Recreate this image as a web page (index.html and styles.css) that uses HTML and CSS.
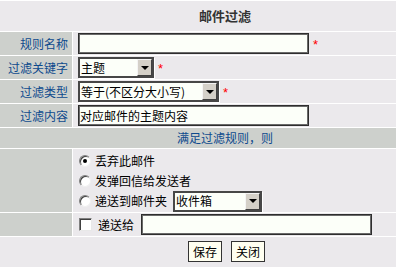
FILE: index.html
```html
<!DOCTYPE html>
<html lang="zh-CN">
<head>
<meta charset="utf-8">
<title>邮件过滤</title>
<link rel="stylesheet" href="styles.css">
</head>
<body>
<div class="form">
  <div class="title">邮件过滤</div>

  <div class="label">规则名称</div>
  <div class="field"><input class="text w231" type="text" value=""><span class="req">*</span></div>

  <div class="label">过滤关键字</div>
  <div class="field"><div class="select s1"><span class="val">主题</span><span class="btn"><i class="tri"></i></span></div><span class="req">*</span></div>

  <div class="label">过滤类型</div>
  <div class="field"><div class="select s2"><span class="val">等于(不区分大小写)</span><span class="btn"><i class="tri"></i></span></div><span class="req">*</span></div>

  <div class="label">过滤内容</div>
  <div class="field"><input class="text w231" type="text" value="对应邮件的主题内容"></div>

  <div class="section">满足过滤规则，则</div>

  <div class="label"></div>
  <div class="field options">
    <label class="opt"><input class="radio" type="radio" name="act" checked><span>丢弃此邮件</span></label>
    <label class="opt"><input class="radio" type="radio" name="act"><span>发弹回信给发送者</span></label>
    <label class="opt"><input class="radio" type="radio" name="act"><span>递送到邮件夹</span><div class="select s3"><span class="val">收件箱</span><span class="btn"><i class="tri"></i></span></div></label>
  </div>

  <div class="label"></div>
  <div class="field"><input class="check" type="checkbox"><span class="fwd">递送给</span><input class="text w231" type="text" value=""></div>

  <div class="footer"><button class="button">保存</button><button class="button">关闭</button></div>
</div>
</body>
</html>
```
FILE: styles.css
```css
html, body {
  margin: 0;
  padding: 0;
  overflow: hidden;
  background: #ebe9ec;
}
body {
  font-family: "Noto Sans CJK SC", "Noto Sans", sans-serif;
  font-size: 12px;
  color: #000;
}
.form {
  width: 396px;
  display: grid;
  grid-template-columns: 72px 1fr;
  grid-template-rows: 30px 23px 23px 23px 23px 20px 63px 23px 31px;
  gap: 1px;
  padding-top: 1px;
  background: #ffffff;
}
.title {
  grid-column: 1 / -1;
  background: #ebe9ec;
  display: flex;
  align-items: center;
  justify-content: center;
  padding-left: 54px;
  font-weight: bold;
  font-size: 13px;
  color: #333;
  line-height: 14px;
}
.label {
  background: #cdd0cc;
  color: #0e4a8c;
  text-align: right;
  padding-right: 4px;
  display: flex;
  align-items: center;
  justify-content: flex-end;
  line-height: 14px;
}
.field {
  background: #ebe9ec;
  display: flex;
  align-items: center;
  padding-left: 5px;
  min-width: 0;
}
.section {
  grid-column: 1 / -1;
  background: #cdd0cc;
  color: #0e4a8c;
  display: flex;
  align-items: center;
  justify-content: center;
  padding-left: 54px;
  line-height: 14px;
}
.text {
  box-sizing: border-box;
  height: 21px;
  margin: 0;
  padding: 0 1px;
  border: 1px solid #2e2e2e;
  box-shadow: inset 0 0 0 1px #6a6a6a;
  background: #fcfff9;
  font: 12px/17px "Noto Sans CJK SC", "Noto Sans", sans-serif;
  color: #000;
  outline: none;
}
.w231 { width: 231px; }
.req {
  color: #f00;
  margin-left: 4px;
  font-family: "Liberation Sans", sans-serif;
  font-size: 13px;
  line-height: 10px;
  padding-top: 3px;
}
.select {
  box-sizing: border-box;
  display: inline-flex;
  align-items: stretch;
  height: 21px;
  border: 2px solid #474747;
  box-shadow: 1px 1px 0 #fff;
  background: #fcfff9;
}
.select .val {
  flex: 1;
  display: flex;
  align-items: center;
  padding-left: 1px;
  line-height: 14px;
  white-space: nowrap;
  overflow: hidden;
}
.select .btn {
  box-sizing: border-box;
  width: 15px;
  background: #d4d0c8;
  border: 1px solid;
  border-color: #f4f4f4 #404040 #404040 #f4f4f4;
  display: flex;
  align-items: center;
  justify-content: center;
}
.tri {
  width: 0;
  height: 0;
  border-left: 4px solid transparent;
  border-right: 4px solid transparent;
  border-top: 4px solid #000;
}
.s1 { width: 76px; }
.s2 { width: 141px; }
.s3 { width: 89px; margin-left: 6px; }
.options {
  flex-direction: column;
  align-items: flex-start;
  justify-content: flex-start;
  padding-top: 2px;
  padding-left: 0;
}
.opt {
  display: flex;
  align-items: center;
  height: 20px;
  line-height: 14px;
  padding-left: 6px;
}
.radio {
  appearance: none;
  -webkit-appearance: none;
  box-sizing: border-box;
  width: 12px;
  height: 12px;
  margin: 0 4px 0 0;
  border-radius: 50%;
  border: 1px solid;
  border-color: #808080 #f0f0f0 #f0f0f0 #808080;
  box-shadow: inset 1px 1px 0 #404040;
  background: #fff;
  position: relative;
}
.radio:checked::after {
  content: "";
  position: absolute;
  left: 3px;
  top: 3px;
  width: 4px;
  height: 4px;
  border-radius: 50%;
  background: #000;
}
.check {
  appearance: none;
  -webkit-appearance: none;
  box-sizing: border-box;
  width: 13px;
  height: 13px;
  margin: 0 0 0 1px;
  border: 1px solid;
  border-color: #808080 #e8e8e8 #e8e8e8 #808080;
  box-shadow: inset 1px 1px 0 #404040;
  background: #fff;
}
.fwd {
  margin-left: 6px;
  margin-right: 7px;
  line-height: 14px;
}
.footer {
  grid-column: 1 / -1;
  background: #ebe9ec;
  display: flex;
  justify-content: center;
  align-items: flex-start;
  gap: 9px;
  padding-top: 4px;
  padding-left: 57px;
}
.button {
  box-sizing: border-box;
  width: 34px;
  height: 21px;
  margin: 0;
  padding: 0;
  border: 1px solid #333;
  background: #fffff0;
  font: 12px/17px "Noto Sans CJK SC", "Noto Sans", sans-serif;
  color: #000;
}
```
